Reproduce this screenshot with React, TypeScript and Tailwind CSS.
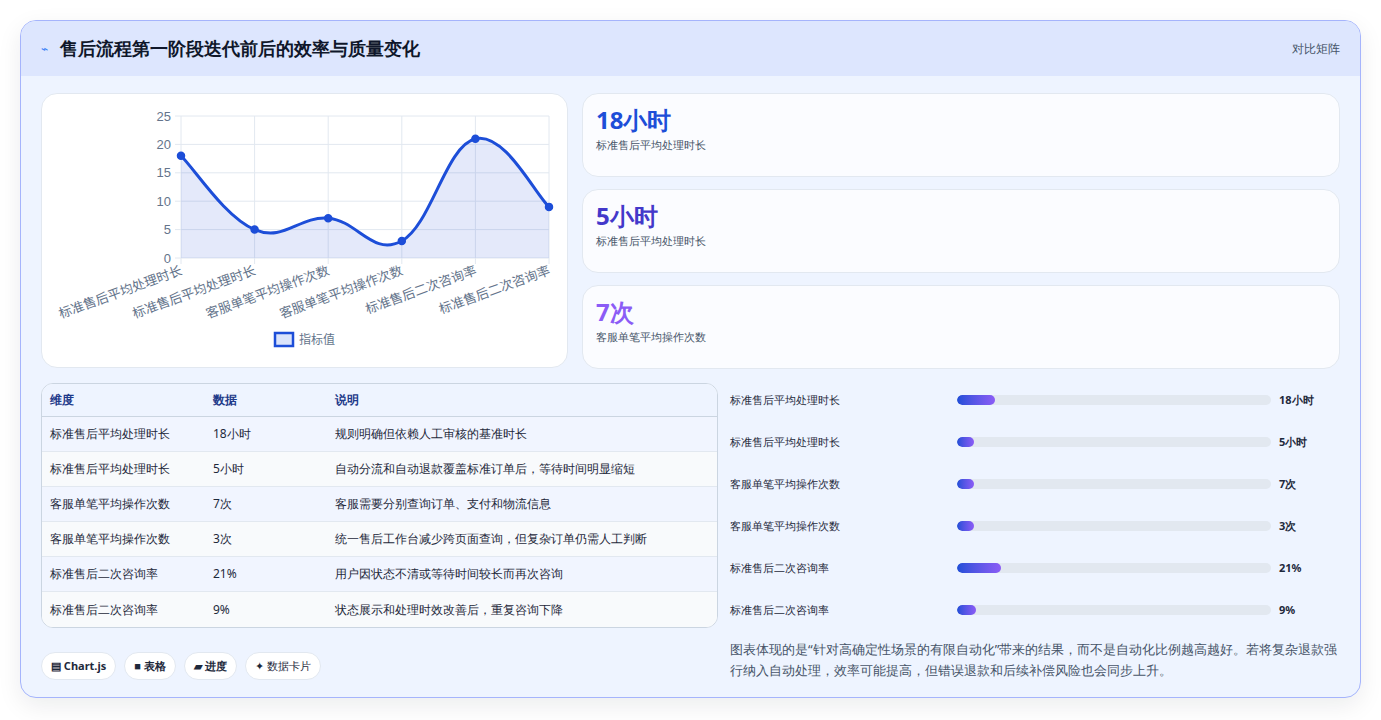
import React from 'react';

const labels = ['标准售后平均处理时长', '标准售后平均处理时长', '客服单笔平均操作次数', '客服单笔平均操作次数', '标准售后二次咨询率', '标准售后二次咨询率'];
const values = [18, 5, 7, 3, 21, 9];
const display = ['18小时', '5小时', '7次', '3次', '21%', '9%'];
const notes = [
  '规则明确但依赖人工审核的基准时长',
  '自动分流和自动退款覆盖标准订单后，等待时间明显缩短',
  '客服需要分别查询订单、支付和物流信息',
  '统一售后工作台减少跨页面查询，但复杂订单仍需人工判断',
  '用户因状态不清或等待时间较长而再次咨询',
  '状态展示和处理时效改善后，重复咨询下降',
];

const X0 = 139;
const X1 = 507;
const Y0 = 164;
const YT = 22;
const px = (i: number) => X0 + (i * (X1 - X0)) / 5;
const py = (v: number) => Y0 - (v * (Y0 - YT)) / 25;

function curve() {
  const pts = values.map((v, i) => [px(i), py(v)]);
  let d = `M${pts[0][0]},${pts[0][1]}`;
  for (let i = 0; i < pts.length - 1; i++) {
    const p0 = pts[i - 1] || pts[i];
    const p1 = pts[i];
    const p2 = pts[i + 1];
    const p3 = pts[i + 2] || p2;
    const t = 0.2;
    const c1 = [p1[0] + (p2[0] - p0[0]) * t, p1[1] + (p2[1] - p0[1]) * t];
    const c2 = [p2[0] - (p3[0] - p1[0]) * t, p2[1] - (p3[1] - p1[1]) * t];
    d += ` C${c1[0]},${c1[1]} ${c2[0]},${c2[1]} ${p2[0]},${p2[1]}`;
  }
  return d;
}

function Chart() {
  const d = curve();
  return (
    <svg width="527" height="275" viewBox="0 0 527 275" className="block">
      {[0, 5, 10, 15, 20, 25].map((v) => (
        <g key={v}>
          <line x1={X0 - 6} x2={X1} y1={py(v)} y2={py(v)} stroke="#e2e8f0" />
          <text x={X0 - 10} y={py(v) + 4.5} textAnchor="end" fontSize="13" fill="#64748b" fontFamily="Liberation Sans, sans-serif">{v}</text>
        </g>
      ))}
      {values.map((_, i) => (
        <line key={i} x1={px(i)} x2={px(i)} y1={YT} y2={Y0 + 6} stroke="#e2e8f0" />
      ))}
      <path d={`${d} L${X1},${Y0} L${X0},${Y0} Z`} fill="#1d4ed8" fillOpacity="0.12" />
      <path d={d} fill="none" stroke="#1d4ed8" strokeWidth="3" />
      {values.map((v, i) => (
        <circle key={i} cx={px(i)} cy={py(v)} r="3.5" fill="#1d4ed8" stroke="#1d4ed8" strokeWidth="1.5" />
      ))}
      {labels.map((l, i) => (
        <text key={i} transform={`translate(${px(i) + 2},${Y0 + 16}) rotate(-20)`} textAnchor="end" fontSize="13" fill="#64748b" fontFamily="Noto Sans CJK SC, sans-serif">{l}</text>
      ))}
      <rect x="233" y="239" width="18" height="13" fill="#dbe4fb" stroke="#1d4ed8" strokeWidth="2.5" />
      <text x="257" y="250" fontSize="12" fill="#64748b" fontFamily="Noto Sans CJK SC, sans-serif">指标值</text>
    </svg>
  );
}

const stats = [
  { v: '18小时', l: '标准售后平均处理时长', c: 'text-[#1d4ed8]' },
  { v: '5小时', l: '标准售后平均处理时长', c: 'text-[#4338ca]' },
  { v: '7次', l: '客服单笔平均操作次数', c: 'text-[#8b5cf6]' },
];

export default function App() {
  return (
    <div className="min-h-screen bg-white p-5 font-['Noto_Sans_CJK_SC',sans-serif]">
      <div className="w-[1341px] h-[678px] rounded-2xl border border-[#a5b4fc] bg-[#eef4ff] overflow-hidden shadow-[0_8px_24px_rgba(15,23,42,0.08)]">
        <div className="h-[55px] bg-[#dde6fe] flex items-center justify-between px-5">
          <div className="flex items-center gap-3">
            <span className="text-[#3b82f6] text-[12px]">⌁</span>
            <h1 className="text-[18px] font-bold text-[#0f172a]">售后流程第一阶段迭代前后的效率与质量变化</h1>
          </div>
          <span className="text-[12px] text-[#475569]">对比矩阵</span>
        </div>
        <div className="px-5 pt-[17px]">
          <div className="flex gap-[14px]">
            <div className="w-[527px] h-[275px] rounded-2xl bg-white border border-[#e2e8f0]">
              <Chart />
            </div>
            <div className="flex-1 flex flex-col gap-3">
              {stats.map((s, i) => (
                <div key={i} className="h-[84px] rounded-2xl bg-[#fbfcff] border border-[#e2e8f0] px-[13px] pt-[9px]">
                  <div className={`text-[24px] font-bold leading-[34px] ${s.c}`}>{s.v}</div>
                  <div className="text-[11px] text-[#475569]">{s.l}</div>
                </div>
              ))}
            </div>
          </div>
          <div className="flex gap-3 mt-[14px]">
            <div className="w-[677px]">
              <div className="rounded-xl border border-[#cbd5e1] overflow-hidden bg-white text-[12px]">
                <div className="flex h-[33px] items-center bg-[#eef4ff] border-b border-[#cbd5e1] text-[#1e3a8a] font-bold">
                  <div className="w-[171px] pl-2">维度</div>
                  <div className="w-[122px]">数据</div>
                  <div className="flex-1">说明</div>
                </div>
                {labels.map((l, i) => (
                  <div key={i} className={`flex h-[35px] items-center text-[#1e293b] ${i < 5 ? 'border-b border-[#e2e8f0]' : ''} ${i % 2 === 0 ? 'bg-[#f1f5ff]' : 'bg-[#f8fafc]'}`}>
                    <div className="w-[171px] pl-2">{l}</div>
                    <div className="w-[122px]">{display[i]}</div>
                    <div className="flex-1">{notes[i]}</div>
                  </div>
                ))}
              </div>
              <div className="flex gap-[8px] mt-[24px] text-[11px] text-[#1e293b] font-bold">
                <span className="h-[28px] px-[9px] rounded-full bg-white border border-[#e2e8f0] flex items-center">▤ Chart.js</span>
                <span className="h-[28px] px-[9px] rounded-full bg-white border border-[#e2e8f0] flex items-center">■ 表格</span>
                <span className="h-[28px] px-[9px] rounded-full bg-white border border-[#e2e8f0] flex items-center">▰ 进度</span>
                <span className="h-[28px] px-[9px] rounded-full bg-white border border-[#e2e8f0] flex items-center font-normal">✦ 数据卡片</span>
              </div>
            </div>
            <div className="flex-1 -mt-[4px]">
              {labels.map((l, i) => (
                <div key={i} className="flex items-center h-[42px] text-[11px] text-[#1e293b]">
                  <div className="w-[227px]">{l}</div>
                  <div className="w-[314px] h-[10px] rounded-full bg-[#e2e8f0] overflow-hidden">
                    <div className="h-full rounded-full bg-gradient-to-r from-[#1d4ed8] to-[#8b5cf6]" style={{ width: `${Math.max(values[i] / 1.5, 5.5)}%` }} />
                  </div>
                  <div className="pl-2 font-bold">{display[i]}</div>
                </div>
              ))}
              <p className="mt-[8px] text-[13px] leading-[21px] text-[#475569]">
                图表体现的是“针对高确定性场景的有限自动化”带来的结果，而不是自动化比例越高越好。若将复杂退款强行纳入自动处理，效率可能提高，但错误退款和后续补偿风险也会同步上升。
              </p>
            </div>
          </div>
        </div>
      </div>
    </div>
  );
}
